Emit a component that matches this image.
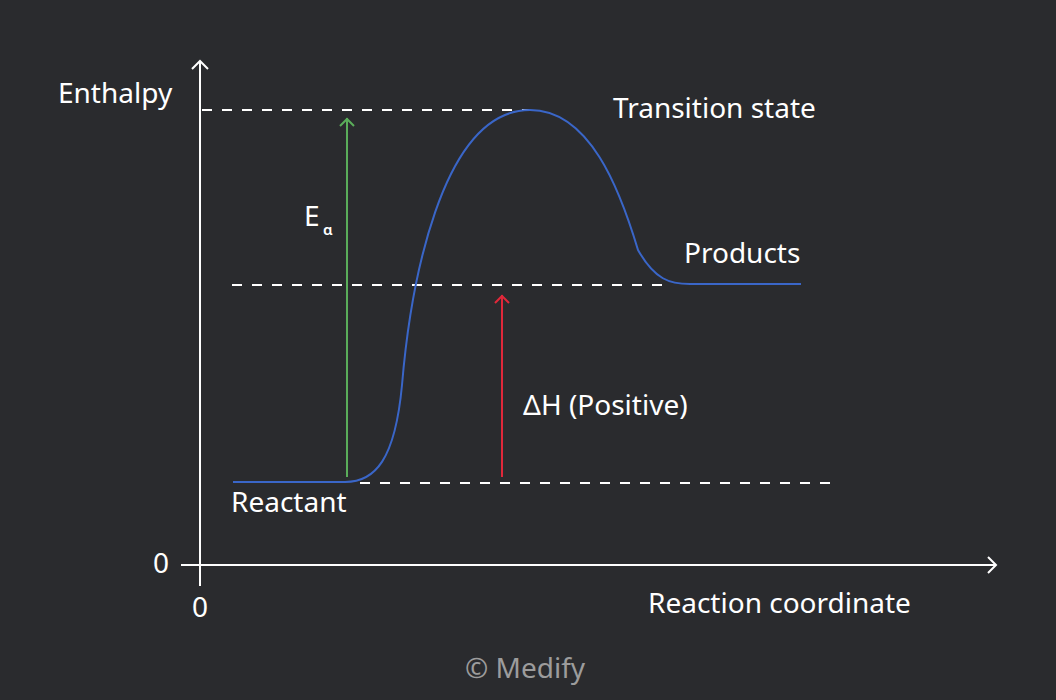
import React from "react";

const WHITE = "#ffffff";

function Arrow({ x, y1, y2, color }: { x: number; y1: number; y2: number; color: string }) {
  return (
    <g stroke={color} strokeWidth={2} fill="none">
      <line x1={x} y1={y1} x2={x} y2={y2} />
      <polyline points={`${x - 7},${y2 + 8} ${x},${y2 + 1} ${x + 7},${y2 + 8}`} />
    </g>
  );
}

export default function App() {
  return (
    <div className="w-[1056px] h-[700px] bg-[#2a2b2e] overflow-hidden">
      <svg
        width={1056}
        height={700}
        viewBox="0 0 1056 700"
        className="block"
        style={{ fontFamily: "'Noto Sans', 'Liberation Sans', sans-serif" }}
      >
        {/* axes */}
        <g stroke={WHITE} strokeWidth={2} fill="none">
          <line x1={200} y1={61} x2={200} y2={586} />
          <polyline points="192,69 200,61 208,69" />
          <line x1={181} y1={565} x2={996} y2={565} />
          <polyline points="988,557 996,565 988,573" />
        </g>

        {/* dashed guides */}
        <g stroke={WHITE} strokeWidth={2} strokeDasharray="10 10">
          <line x1={202} y1={110} x2={530} y2={110} />
          <line x1={232} y1={285} x2={664} y2={285} />
          <line x1={360} y1={483} x2={832} y2={483} />
        </g>

        {/* energy curve */}
        <path
          d="M233,482 L345,482 C375,482 395,460 402,385 C410,290 440,110 530,110 C590,110 620,190 638,250 C655,280 670,284 690,284 L801,284"
          stroke="#3a66c8"
          strokeWidth={2}
          fill="none"
        />

        <Arrow x={347} y1={477} y2={118} color="#5aad5a" />
        <Arrow x={502} y1={477} y2={295} color="#e0283a" />

        {/* labels */}
        <g fill={WHITE} fontSize={28}>
          <text x={58} y={103}>Enthalpy</text>
          <text x={613} y={118}>Transition state</text>
          <text x={684} y={263}>Products</text>
          <text x={231} y={512}>Reactant</text>
          <text x={523} y={415}>ΔH (Positive)</text>
          <text x={648} y={613}>Reaction coordinate</text>
          <text x={153} y={573}>0</text>
          <text x={192} y={617}>0</text>
          <text x={304} y={226}>E</text>
          <text x={323} y={235} fontSize={15} fontWeight={600}>ɑ</text>
        </g>
        <text x={465} y={678} fill="#9c9c9c" fontSize={28}>
          © Medify
        </text>
      </svg>
    </div>
  );
}
